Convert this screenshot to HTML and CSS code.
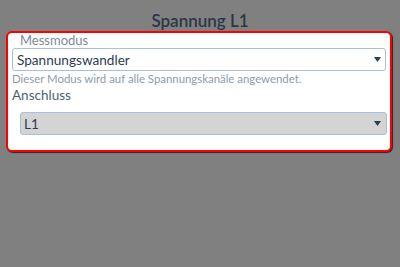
FILE: index.html
```html
<!DOCTYPE html>
<html lang="de">
<head>
<meta charset="utf-8">
<link rel="stylesheet" href="styles.css">
</head>
<body>
<h1 class="title">Spannung L1</h1>
<div class="panel">
  <div class="legend">Messmodus</div>
  <div class="select">
    <span class="select-text">Spannungswandler</span>
    <svg class="caret" width="7" height="5" viewBox="0 0 7 5"><path d="M0 0H7L3.5 5Z"/></svg>
  </div>
  <div class="hint">Dieser Modus wird auf alle Spannungskanäle angewendet.</div>
  <div class="label">Anschluss</div>
  <div class="select select-disabled">
    <span class="select-text">L1</span>
    <svg class="caret" width="7" height="5" viewBox="0 0 7 5"><path d="M0 0H7L3.5 5Z"/></svg>
  </div>
</div>
</body>
</html>
```

FILE: styles.css
```css
html, body {
  margin: 0;
  padding: 0;
}
body {
  background: #808080;
  font-family: Lato, "Open Sans", sans-serif;
  width: 400px;
  height: 267px;
  overflow: hidden;
}
.title {
  margin: 0;
  padding-top: 10px;
  height: 21px;
  line-height: 21px;
  text-align: center;
  font-size: 17px;
  font-weight: 600;
  color: #2b3746;
}
.panel {
  margin: 0 8px 0 6px;
  background: #fff;
  border: 2px solid #f00;
  border-radius: 6px;
  box-shadow: 1px 1px 1px #3a2020;
  padding: 0 4px 15px 4px;
}
.legend {
  padding-left: 8px;
  font-size: 13px;
  line-height: 15px;
  color: #7d8a99;
}
.select {
  display: flex;
  align-items: center;
  justify-content: space-between;
  height: 21px;
  border: 1px solid #a9bfd9;
  border-radius: 3px;
  background: #fff;
  padding: 0 4px 0 4px;
}
.select-text {
  font-size: 13.6px;
  color: #2c3e50;
}
.caret {
  fill: #2c3e50;
}
.hint {
  font-size: 11.4px;
  line-height: 13px;
  padding-top: 1px;
  color: #8e9cab;
}
.label {
  padding-top: 2px;
  font-size: 13.5px;
  line-height: 17px;
  color: #4f5f6f;
}
.select-disabled {
  margin-top: 8px;
  margin-left: 8px;
  margin-right: -1px;
  background: #d4d4d4;
  padding-left: 3px;
  padding-right: 5px;
}
```
